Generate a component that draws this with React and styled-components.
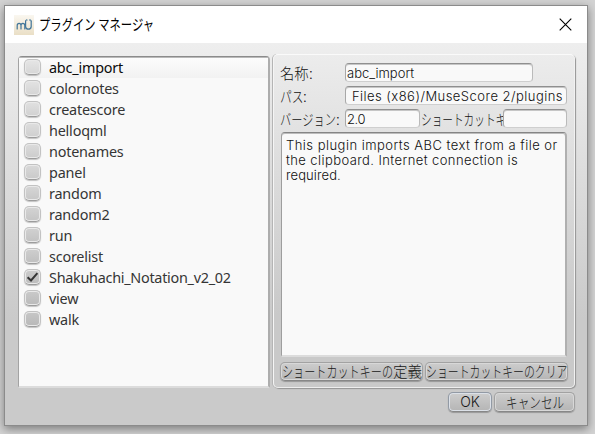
import React from "react";
import styled, { createGlobalStyle } from "styled-components";

const GlobalStyle = createGlobalStyle`
  *, *::before, *::after { box-sizing: border-box; }
  body { margin: 0; overflow: hidden; }
`;

const JP = '"Noto Sans CJK JP", sans-serif';

const Desktop = styled.div`
  width: 595px;
  height: 434px;
  padding: 5px 7px 8px 4px;
  background: #d3d3d3;
  overflow: hidden;
`;

const Window = styled.div`
  width: 584px;
  height: 421px;
  display: flex;
  flex-direction: column;
  border: 1px solid #8b8b8b;
  background: #cacaca;
  box-shadow: 0 3px 9px rgba(0, 0, 0, 0.42);
`;

const TitleBar = styled.header`
  display: flex;
  align-items: center;
  justify-content: space-between;
  flex: 0 0 37px;
  padding: 0 15px 0 9px;
  background: #fff;
`;

const TitleGroup = styled.div`
  display: flex;
  align-items: center;
  gap: 5px;
`;

const Title = styled.h1`
  margin: 0 0 2px;
  font: 400 15px/20px ${JP};
  color: #000;
  white-space: nowrap;
`;

/* Narrow kana: full-width glyphs condensed into a given advance. */
const Kana = styled.span`
  display: inline-block;
  width: ${(p) => p.$width}px;
  flex: none;
  white-space: nowrap;
  transform: scaleX(${(p) => p.$scale});
  transform-origin: left center;
`;

const CloseButton = styled.button`
  display: flex;
  padding: 0;
  border: 0;
  background: none;
`;

const Content = styled.main`
  flex: 1;
  display: flex;
  flex-direction: column;
  padding: 11px 12px 0 13px;
  background: linear-gradient(#eeeeee, #cacaca 72%);
`;

const Panes = styled.div`
  display: flex;
  gap: 3px;
  height: 334px;
`;

const PluginList = styled.ul`
  width: 252px;
  height: 332px;
  margin: 2px 0 0;
  padding: 0;
  list-style: none;
  background: #f9f9f9;
  border: 1px solid #a9a9a9;
  border-width: 1px 2px 2px 1px;
  border-color: #8b8b8b #adadad #dcdcdc #a3a3a3;
  border-radius: 4px 4px 1px 1px;
  box-shadow: inset 0 1px 0 #b9b9b9;
`;

const PluginRow = styled.li`
  display: flex;
  align-items: center;
  height: 21px;
  padding-left: 5px;
  gap: 8px;
  font: 400 14.4px/20px "Noto Sans", sans-serif;
  letter-spacing: ${(p) => (p.$long ? "-0.27px" : "-0.2px")};
  color: ${(p) => (p.$current ? "#0c0c0c" : "#353535")};
  background: ${(p) => (p.$current ? "linear-gradient(#fcfcfc, #f2f2f2)" : "none")};
  box-shadow: ${(p) => (p.$current ? "inset 0 1px 0 #b9b9b9" : "none")};
`;

const CheckBox = styled.span`
  display: flex;
  align-items: center;
  justify-content: center;
  flex: none;
  width: 17px;
  height: 16px;
  margin-bottom: 1px;
  border-radius: 5px;
  border: 1px solid #c2c2c2;
  border-bottom-color: #9c9c9c;
  background: linear-gradient(
    hsl(0, 0%, ${(p) => p.$shade + 3}%),
    hsl(0, 0%, ${(p) => p.$shade - 3}%)
  );
  box-shadow: inset 0 0 0 1px #e9e9e9, 0 1px 1px rgba(0, 0, 0, 0.22);
`;

const Details = styled.section`
  width: 302px;
  height: 334px;
  display: flex;
  flex-direction: column;
  padding: 8px 6px 0;
  border: 1px solid;
  border-color: #fafafa #f1f1f1 #ededed #f5f5f5;
  border-radius: 5px;
  background: linear-gradient(#ececec, #c9c9c9 78%);
  box-shadow: -1px 0 0 #b5b5b5, 1px 1px 1px #949494;
  color: #101010;
`;

const FieldRow = styled.div`
  display: flex;
  align-items: flex-start;
  height: 23px;
  flex: none;
`;

const Label = styled.label`
  display: flex;
  width: ${(p) => p.$width}px;
  height: 19px;
  padding-left: ${(p) => p.$indent || 0}px;
  flex: none;
  overflow: hidden;
  white-space: nowrap;
  font: 300 15px/19px ${JP};
`;

const Field = styled.div`
  width: ${(p) => p.$width}px;
  height: 19px;
  flex: none;
  display: flex;
  justify-content: ${(p) => (p.$end ? "flex-end" : "flex-start")};
  padding: 0 3px 0 1px;
  overflow: hidden;
  white-space: nowrap;
  font: 300 13px/19px Inter, sans-serif;
  letter-spacing: ${(p) => p.$spacing || 0};
  border: 1px solid;
  border-color: #8f8f8f #bababa #cfcfcf #a8a8a8;
  border-radius: 4px;
  background: #f9f9f9;
  box-shadow: inset 0 1px 0 #c6c6c6;
`;

const Description = styled.div`
  width: 286px;
  height: 225px;
  margin: 0 0 5px 1px;
  flex: none;
  padding: 5px 4px;
  font: 300 13px/15px Inter, sans-serif;
  white-space: nowrap;
  border: 1px solid;
  border-width: 1px 2px 2px 1px;
  border-color: #858585 #b0b0b0 #dcdcdc #9e9e9e;
  border-radius: 4px 4px 1px 1px;
  background: #f9f9f9;
  box-shadow: inset 0 1px 0 #bcbcbc;
`;

const Line = styled.div`
  letter-spacing: ${(p) => p.$spacing || 0};
`;

const ButtonRow = styled.div`
  display: flex;
  gap: ${(p) => p.$gap}px;
  justify-content: ${(p) => (p.$end ? "flex-end" : "flex-start")};
`;

const Button = styled.button`
  width: ${(p) => p.$width}px;
  height: ${(p) => p.$height || 19}px;
  flex: none;
  display: flex;
  align-items: center;
  justify-content: center;
  padding: 0 0 2px;
  white-space: nowrap;
  font: 300 ${(p) => (p.$latin ? "14px/17px Inter, sans-serif" : `15px/17px ${JP}`)};
  color: #161616;
  border: 1px solid ${(p) => (p.$default ? "#929aa5" : "#a2a2a2")};
  border-bottom-color: #878787;
  border-radius: 5px;
  background: linear-gradient(#cdcdcd, #b5b5b5);
  box-shadow: inset 0 0 0 1px ${(p) => (p.$default ? "#dce1e8" : "#d8d8d8")},
    0 1px 1px rgba(0, 0, 0, 0.25);
`;

const Footer = styled.footer`
  padding-top: 4px;
`;

const LogoIcon = () => (
  <svg width="20" height="20" viewBox="0 0 20 20" aria-hidden="true">
    <defs>
      <linearGradient id="logo" x2="0" y2="1">
        <stop stopColor="#faf7f0" />
        <stop offset="1" stopColor="#eadfc6" />
      </linearGradient>
    </defs>
    <path fill="url(#logo)" d="M0 0h20v20H0z" />
    <g fill="none" stroke="#42769a" strokeWidth="1.2" strokeLinecap="round">
      <path d="M3.2 14V10.4Q3.2 8.3 5.1 8.3Q7 8.3 7 10.4V14M7 10.4Q7 8.3 8.9 8.3Q10.8 8.3 10.8 10.4V14" />
      <path d="M11.6 6V11.6Q11.8 14.2 14.4 14.2Q17 14.2 17.2 11.6V6" />
      <path d="M11.6 6Q11.6 4 13.2 4.9M15.4 4.9Q17.2 4 17.2 6" strokeWidth="1" />
    </g>
  </svg>
);

const CloseIcon = () => (
  <svg width="13" height="13" viewBox="0 0 13 13" aria-hidden="true">
    <path d="M.7.7 12.3 12.3M12.3.7.7 12.3" stroke="#000" strokeWidth="1.1" />
  </svg>
);

const CheckIcon = () => (
  <svg width="13" height="12" viewBox="0 0 13 12" aria-hidden="true">
    <path d="M1.6 6.2 5 9.5 11.4 2.2" fill="none" stroke="#353535" strokeWidth="2" />
  </svg>
);

const plugins = [
  "abc_import", "colornotes", "createscore", "helloqml", "notenames", "panel",
  "random", "random2", "run", "scorelist", "Shakuhachi_Notation_v2_02", "view", "walk",
];
const enabled = "Shakuhachi_Notation_v2_02";

export default function App() {
  return (
    <Desktop>
      <GlobalStyle />
      <Window>
        <TitleBar>
          <TitleGroup>
            <LogoIcon />
            <Title><Kana $width={116} $scale={0.755}>プラグイン マネージャ</Kana></Title>
          </TitleGroup>
          <CloseButton aria-label="閉じる"><CloseIcon /></CloseButton>
        </TitleBar>
        <Content>
          <Panes>
            <PluginList>
              {plugins.map((name, i) => (
                <PluginRow key={name} $current={i === 0} $long={name.length > 20}>
                  <CheckBox $shade={87 - i}>{name === enabled && <CheckIcon />}</CheckBox>
                  {name}
                </PluginRow>
              ))}
            </PluginList>
            <Details>
              <FieldRow>
                <Label $width={65}><Kana $width={29} $scale={0.95}>名称</Kana>:</Label>
                <Field $width={188}>abc_import</Field>
              </FieldRow>
              <FieldRow>
                <Label $width={65}><Kana $width={23} $scale={0.78}>パス</Kana>:</Label>
                <Field $width={222} $end $spacing="0.47px">Files (x86)/MuseScore 2/plugins</Field>
              </FieldRow>
              <FieldRow>
                <Label $width={65}><Kana $width={56} $scale={0.75}>バージョン</Kana>:</Label>
                <Field $width={75} $spacing="-0.4px">2.0</Field>
                <Label $width={83} $indent={1}><Kana $width={98} $scale={0.71}>ショートカットキー:</Kana></Label>
                <Field $width={64} />
              </FieldRow>
              <Description>
                <Line $spacing="0.47px">This plugin imports ABC text from a file or</Line>
                <Line $spacing="0.41px">the clipboard. Internet connection is</Line>
                <Line $spacing="0.1px">required.</Line>
              </Description>
              <ButtonRow $gap={2}>
                <Button $width={143}><Kana $width={111} $scale={0.74}>ショートカットキーの</Kana><Kana $width={29} $scale={0.97}>定義</Kana></Button>
                <Button $width={143}><Kana $width={141} $scale={0.725}>ショートカットキーのクリア</Kana></Button>
              </ButtonRow>
            </Details>
          </Panes>
          <Footer>
            <ButtonRow $gap={2} $end>
              <Button $width={44} $height={20} $default $latin>OK</Button>
              <Button $width={81} $height={20}><Kana $width={58} $scale={0.775}>キャンセル</Kana></Button>
            </ButtonRow>
          </Footer>
        </Content>
      </Window>
    </Desktop>
  );
}
